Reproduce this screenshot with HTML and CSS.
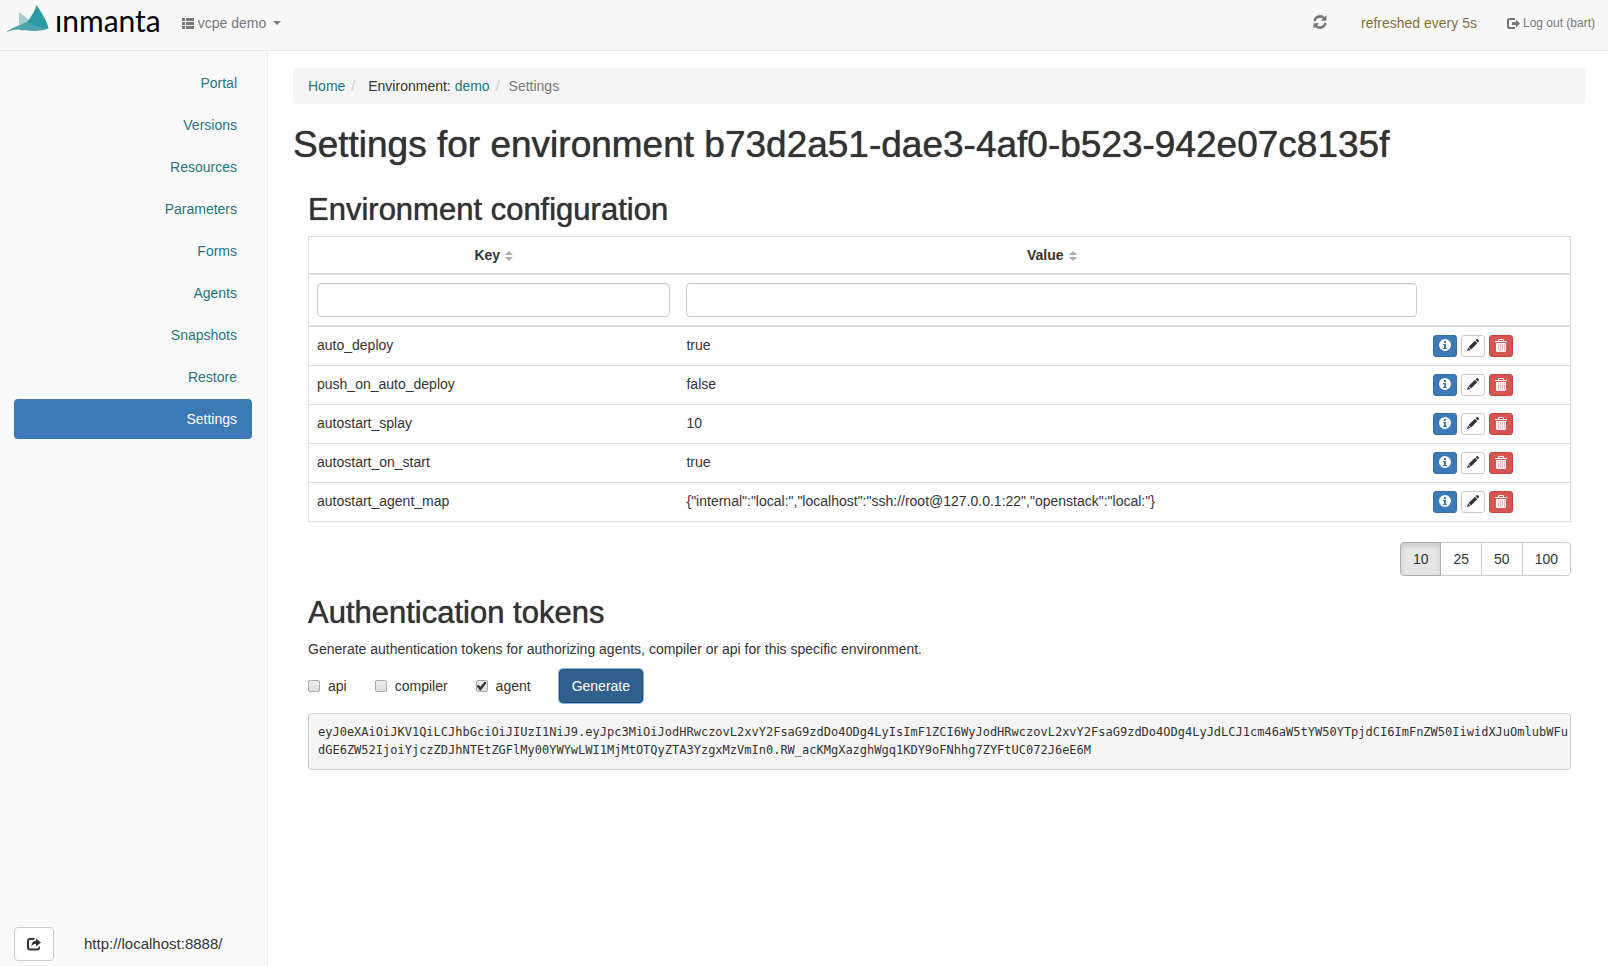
FILE: index.html
```html
<!DOCTYPE html>
<html lang="en">
<head>
<meta charset="utf-8">
<title>Inmanta - Settings</title>
<meta name="viewport" content="width=device-width, initial-scale=1">
<link rel="stylesheet" href="styles.css">
</head>
<body>
<svg class="sprite" aria-hidden="true">
  <symbol id="i-list" viewBox="0 0 12 11"><path d="M0 0h3v3H0zM4 0h8v3H4zM0 4h3v3H0zM4 4h8v3H4zM0 8h3v3H0zM4 8h8v3H4z"/></symbol>
  <symbol id="i-refresh" viewBox="0 0 14 14"><path d="M.500 6.200A6.400 6.400 0 0 1 11.500 2L13.500.300V5.700H8l1.900-1.900A4.500 4.500 0 0 0 2.600 6.200zM13.500 7.800A6.400 6.400 0 0 1 2.500 12L.500 13.700V8.300H6L4.100 10.200A4.500 4.500 0 0 0 11.400 7.800z"/></symbol>
  <symbol id="i-logout" viewBox="0 0 13 11"><path d="M8 0H2.500A2.500 2.500 0 0 0 0 2.500v6A2.500 2.500 0 0 0 2.500 11H8V9H3a1 1 0 0 1-1-1V3a1 1 0 0 1 1-1h5zM9 1.500l4 4-4 4V7H5V4h4z"/></symbol>
  <symbol id="i-info" viewBox="0 0 12 12"><path fill-rule="evenodd" d="M6 0a6 6 0 1 1 0 12A6 6 0 0 1 6 0zM5 2v2h2V2zM4 5v1h1v3H4v1h4V9H7V5z"/></symbol>
  <symbol id="i-pencil" viewBox="0 0 12 12"><path d="M9.600.300a1 1 0 0 1 1.300 0l.9.9a1 1 0 0 1 0 1.300l-1 1L8.600 1.300zM7.900 1.800l2.400 2.400-6.300 6.300-2.400-2.400zM1.100 8.600l2.400 2.400L0 12z"/></symbol>
  <symbol id="i-trash" viewBox="0 0 12 13"><path fill-rule="evenodd" d="M4 0h4l1 1v1h3v1H0V2h3V1zM4 1v1h4V1zM1 4h10v8l-1 1H2l-1-1z"/><path class="slots" d="M3.500 5v7M5.500 5v7M7.500 5v7M9.500 5v7"/></symbol>
  <symbol id="i-share" viewBox="0 0 14 13"><path d="M8 .500H3A3 3 0 0 0 0 3.500V10a3 3 0 0 0 3 3h7a3 3 0 0 0 3-3V8.500l-2 1.700c0 .500-.400.800-.900.800H3a1 1 0 0 1-1-1V3.500a1 1 0 0 1 1-1h3.500zM9 1l5 4-5 4V6.500C7 6.500 5.500 7 4.500 9 4.500 5.500 6 3.500 9 3.300z"/></symbol>
</svg>

<header class="navbar">
  <a class="brand" href="#" aria-label="inmanta home">
    <svg class="brand-mark" viewBox="0 0 43 28" aria-hidden="true">
      <path fill="#a8ccd1" d="M13 7l13 10-9 9-4-1z"/>
      <path fill="#2a9aa5" d="M30.500 0C35 7 41 15 42.500 23.500 37 25 28 23 21 17 25 12 29 6 30.500 0z"/>
      <path fill="#4aa5ae" d="M0 27c8-5 13-7 21-10 7 4 14 6 21.500 6.500C36 26.500 26 26.500 13 24.500 8 24.500 4 25.500 0 27z"/>
    </svg>
    <span class="brand-name">ınmanta</span>
  </a>
  <button class="env-menu" type="button"><svg class="icon-list"><use href="#i-list"/></svg>vcpe demo<span class="caret"></span></button>
  <div class="nav-right">
    <button class="refresh" type="button" aria-label="Refresh"><svg class="icon-refresh"><use href="#i-refresh"/></svg></button>
    <span class="refresh-text">refreshed every 5s</span>
    <a class="logout" href="#"><svg class="icon-logout"><use href="#i-logout"/></svg>Log out (bart)</a>
  </div>
</header>

<div class="layout">
  <aside class="sidebar">
    <nav class="menu">
      <a href="#">Portal</a>
      <a href="#">Versions</a>
      <a href="#">Resources</a>
      <a href="#">Parameters</a>
      <a href="#">Forms</a>
      <a href="#">Agents</a>
      <a href="#">Snapshots</a>
      <a href="#">Restore</a>
      <a href="#" class="active" aria-current="page">Settings</a>
    </nav>
    <div class="server">
      <button class="btn-share" type="button" aria-label="Change server"><svg class="icon-share"><use href="#i-share"/></svg></button>
      <span class="server-url">http://localhost:8888/</span>
    </div>
  </aside>

  <main class="main">
    <nav class="breadcrumb" aria-label="Breadcrumb">
      <a href="#">Home</a><span class="sep">/</span><span class="env">Environment: <a href="#">demo</a></span><span class="sep">/</span><span class="current">Settings</span>
    </nav>
    <h1>Settings for environment b73d2a51-dae3-4af0-b523-942e07c8135f</h1>

    <section class="panel">
      <h2>Environment configuration</h2>
      <table class="settings">
        <colgroup><col class="c-key"><col class="c-value"><col class="c-actions"></colgroup>
        <thead>
          <tr><th>Key<span class="sort"></span></th><th>Value<span class="sort"></span></th><th></th></tr>
          <tr>
            <th><input type="text" aria-label="Filter by key"></th>
            <th><input type="text" aria-label="Filter by value"></th>
            <th></th>
          </tr>
        </thead>
        <tbody>
          <tr><td>auto_deploy</td><td>true</td><td><div class="actions"><button class="xs info" type="button" aria-label="Info"><svg><use href="#i-info"/></svg></button><button class="xs edit" type="button" aria-label="Edit"><svg><use href="#i-pencil"/></svg></button><button class="xs remove" type="button" aria-label="Delete"><svg><use href="#i-trash"/></svg></button></div></td></tr>
          <tr><td>push_on_auto_deploy</td><td>false</td><td><div class="actions"><button class="xs info" type="button" aria-label="Info"><svg><use href="#i-info"/></svg></button><button class="xs edit" type="button" aria-label="Edit"><svg><use href="#i-pencil"/></svg></button><button class="xs remove" type="button" aria-label="Delete"><svg><use href="#i-trash"/></svg></button></div></td></tr>
          <tr><td>autostart_splay</td><td>10</td><td><div class="actions"><button class="xs info" type="button" aria-label="Info"><svg><use href="#i-info"/></svg></button><button class="xs edit" type="button" aria-label="Edit"><svg><use href="#i-pencil"/></svg></button><button class="xs remove" type="button" aria-label="Delete"><svg><use href="#i-trash"/></svg></button></div></td></tr>
          <tr><td>autostart_on_start</td><td>true</td><td><div class="actions"><button class="xs info" type="button" aria-label="Info"><svg><use href="#i-info"/></svg></button><button class="xs edit" type="button" aria-label="Edit"><svg><use href="#i-pencil"/></svg></button><button class="xs remove" type="button" aria-label="Delete"><svg><use href="#i-trash"/></svg></button></div></td></tr>
          <tr><td>autostart_agent_map</td><td>{"internal":"local:","localhost":"ssh://root@127.0.0.1:22","openstack":"local:"}</td><td><div class="actions"><button class="xs info" type="button" aria-label="Info"><svg><use href="#i-info"/></svg></button><button class="xs edit" type="button" aria-label="Edit"><svg><use href="#i-pencil"/></svg></button><button class="xs remove" type="button" aria-label="Delete"><svg><use href="#i-trash"/></svg></button></div></td></tr>
        </tbody>
      </table>
      <div class="page-sizes">
        <button class="active" type="button">10</button><button type="button">25</button><button type="button">50</button><button type="button">100</button>
      </div>
    </section>

    <section class="panel">
      <h2>Authentication tokens</h2>
      <p>Generate authentication tokens for authorizing agents, compiler or api for this specific environment.</p>
      <form class="token-form">
        <label><input type="checkbox">api</label>
        <label><input type="checkbox">compiler</label>
        <label><input type="checkbox" checked>agent</label>
        <button class="generate" type="button">Generate</button>
      </form>
      <pre class="token">eyJ0eXAiOiJKV1QiLCJhbGciOiJIUzI1NiJ9.eyJpc3MiOiJodHRwczovL2xvY2FsaG9zdDo4ODg4LyIsImF1ZCI6WyJodHRwczovL2xvY2FsaG9zdDo4ODg4LyJdLCJ1cm46aW5tYW50YTpjdCI6ImFnZW50IiwidXJuOmlubWFudGE6ZW52IjoiYjczZDJhNTEtZGFlMy00YWYwLWI1MjMtOTQyZTA3YzgxMzVmIn0.RW_acKMgXazghWgq1KDY9oFNhhg7ZYFtUC072J6eE6M</pre>
    </section>
  </main>
</div>
</body>
</html>
```
FILE: styles.css
```css
* { box-sizing: border-box; }

body {
  margin: 0;
  min-height: 100vh;
  display: flex;
  flex-direction: column;
  font: 14px/20px "Liberation Sans", Arial, sans-serif;
  color: #333;
  background: #fff;
}

a { color: #1f7580; text-decoration: none; }
button, input { font: inherit; color: inherit; }
button { cursor: pointer; }
svg { display: block; fill: currentColor; }
.sprite { position: absolute; width: 0; height: 0; }

/* Top bar */
.navbar {
  display: flex;
  align-items: center;
  height: 51px;
  padding: 0 13px 4px 6px;
  background: #f8f8f8;
  border-bottom: 1px solid #e7e7e7;
  color: #777;
}
.brand { display: flex; align-items: center; gap: 6px; color: #000; }
.brand-mark { width: 43px; height: 28px; margin-bottom: 8px; }
.brand-name { font: 30px/30px Lato, sans-serif; margin-bottom: 6px; }
.env-menu {
  display: flex;
  align-items: center;
  margin-left: 21px;
  padding: 0;
  border: 0;
  background: none;
}
.icon-list { width: 12px; height: 11px; margin-right: 4px; }
.caret {
  margin-left: 7px;
  border: 4px solid transparent;
  border-top-color: currentColor;
  border-bottom: 0;
}
.nav-right { display: flex; align-items: center; margin-left: auto; }
.refresh { padding: 0; border: 0; background: none; }
.icon-refresh { width: 14px; height: 14px; margin-bottom: 2px; }
.refresh-text { margin: 0 30px 0 34px; color: #8a6d3b; }
.logout { display: flex; align-items: center; gap: 3px; font-size: 12px; color: #777; }
.icon-logout { width: 13px; height: 11px; }

/* Page columns */
.layout { flex: 1; display: grid; grid-template-columns: 1fr 5fr; }

.sidebar {
  display: flex;
  flex-direction: column;
  justify-content: space-between;
  padding: 12px 15px 5px 14px;
  background: #fafafa;
  border-right: 1px solid #eee;
}
.menu { display: flex; flex-direction: column; gap: 2px; text-align: right; }
.menu a { padding: 10px 15px; border-radius: 4px; }
.menu .active { background: #3b79b7; color: #fff; }
.server { display: flex; align-items: center; gap: 30px; }
.server-url { font-size: 15px; }
.btn-share {
  padding: 9px 12px;
  border: 1px solid #ccc;
  border-radius: 4px;
  background: #fff;
}
.icon-share { width: 14px; height: 14px; }

.main { min-width: 0; padding: 17px 22px 20px 25px; }
.breadcrumb {
  padding: 8px 15px;
  background: #f5f5f5;
  border-radius: 4px;
}
.sep { padding: 0 9px 0 6px; color: #ccc; }
.env { padding-left: 4px; }
.current { color: #777; }

h1, h2 { margin: 0; font-weight: 400; text-shadow: 0 0 1px #333; }
h1 { margin-top: 21px; font-size: 37px; line-height: 40px; }
h2 { font-size: 31px; line-height: 34px; }
.panel { padding: 0 15px; }
h1 + .panel { margin-top: 28px; }

/* Settings table */
.settings {
  width: 100%;
  margin-top: 9px;
  table-layout: fixed;
  border: 1px solid #ddd;
  border-collapse: separate;
  border-spacing: 0;
}
.c-key { width: 29.3%; }
.c-value { width: 59.2%; }
.settings th { padding: 8px; border-bottom: 2px solid #ddd; }
.settings td {
  padding: 8px;
  border-bottom: 1px solid #ddd;
  vertical-align: top;
  overflow-wrap: anywhere;
}
.settings tbody tr:last-child td { border-bottom: 0; }
.settings input {
  display: block;
  width: 100%;
  height: 34px;
  padding: 6px 12px;
  border: 1px solid #ccc;
  border-radius: 4px;
  background: #fff;
  box-shadow: inset 0 1px 1px rgba(0, 0, 0, .075);
  font-weight: 400;
}
.sort {
  display: inline-flex;
  flex-direction: column;
  gap: 2px;
  margin-left: 5px;
  vertical-align: middle;
}
.sort::before, .sort::after { content: ""; border: 4px solid transparent; }
.sort::before { border-top: 0; border-bottom-color: #aaa; }
.sort::after { border-bottom: 0; border-top-color: #aaa; }

.actions { display: flex; gap: 4px; }
.xs {
  width: 24px;
  height: 22px;
  padding: 0 5px;
  border: 1px solid #ccc;
  border-radius: 3px;
  background: #fff;
}
.xs svg { width: 12px; height: 12px; margin-bottom: 2px; }
.info { color: #fff; background: #3b79b7; border-color: #336ca6; }
.remove { color: #fff; background: #d55552; border-color: #d0403c; }
.xs.remove svg { height: 13px; }
.slots { fill: none; stroke: #efb9b2; stroke-width: 1; }

.page-sizes { display: flex; justify-content: flex-end; margin-top: 20px; }
.page-sizes button {
  margin-left: -1px;
  padding: 6px 12px;
  border: 1px solid #ccc;
  background: #fff;
}
.page-sizes button:first-child { border-radius: 4px 0 0 4px; }
.page-sizes button:last-child { border-radius: 0 4px 4px 0; }
.page-sizes .active {
  z-index: 1;
  background: #e6e6e6;
  border-color: #adadad;
  box-shadow: inset 0 3px 5px rgba(0, 0, 0, .125);
}

/* Tokens */
.panel + .panel { margin-top: 20px; }
.panel p { margin: 9px 0 10px; }
.token-form { display: flex; align-items: center; }
.token-form label { display: flex; align-items: center; gap: 8px; margin-right: 28px; }
.token-form input {
  appearance: none;
  display: grid;
  place-items: center;
  width: 12px;
  height: 12px;
  margin: 0;
  border: 1px solid #a9a9a9;
  border-radius: 2px;
  background: linear-gradient(#eee, #ddd);
}
.token-form input:checked::before {
  content: "";
  width: 10px;
  height: 9px;
  background: #333;
  clip-path: polygon(0 50%, 18% 36%, 38% 58%, 82% 0, 100% 14%, 42% 100%, 34% 100%);
}
.generate {
  padding: 6px 12px;
  border: 1px solid #204d74;
  border-radius: 4px;
  background: #30608d;
  color: #fff;
  box-shadow: 0 0 0 1px #8fb4e3;
}
.token {
  margin: 10px 0 0;
  padding: 9px 1px 10px 9px;
  border: 1px solid #ccc;
  border-radius: 4px;
  background: #f5f5f5;
  font: 12px/18px "DejaVu Sans Mono", "Liberation Mono", monospace;
  white-space: pre-wrap;
  word-break: break-all;
}
```
